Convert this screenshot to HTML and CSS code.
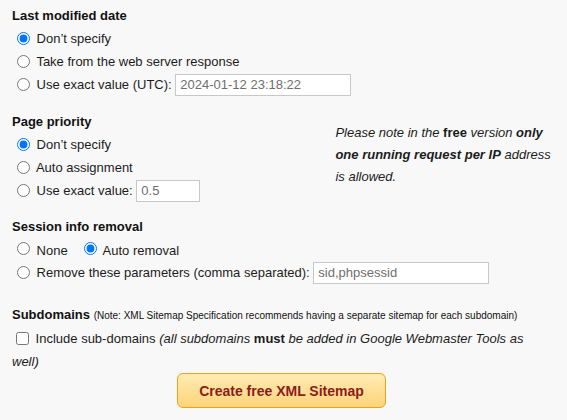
FILE: index.html
```html
<!DOCTYPE html>
<html>
<head>
<meta charset="utf-8">
<link rel="stylesheet" href="styles.css">
</head>
<body>
<form class="form">
  <section class="group">
    <h3 class="title">Last modified date</h3>
    <label class="opt"><input type="radio" name="lm" checked> Don’t specify</label>
    <label class="opt"><input type="radio" name="lm"> Take from the web server response</label>
    <label class="opt"><input type="radio" name="lm"> Use exact value (UTC): <input class="field w-date" type="text" value="2024-01-12 23:18:22"></label>
  </section>

  <section class="group g2 split">
    <div class="col">
      <h3 class="title">Page priority</h3>
      <label class="opt"><input type="radio" name="pp" checked> Don’t specify</label>
      <label class="opt"><input type="radio" name="pp"> Auto assignment</label>
      <label class="opt"><input type="radio" name="pp"> Use exact value: <input class="field w-prio" type="text" value="0.5"></label>
    </div>
    <p class="note">Please note in the <b class="up">free</b> version <b>only one running request per IP</b> address is allowed.</p>
  </section>

  <section class="group g3">
    <h3 class="title">Session info removal</h3>
    <div class="opt">
      <label><input type="radio" name="si"> None</label>
      <label class="gap"><input type="radio" name="si" checked> Auto removal</label>
    </div>
    <label class="opt"><input type="radio" name="si"> Remove these parameters (comma separated): <input class="field w-sess" type="text" value="sid,phpsessid"></label>
  </section>

  <section class="group g4">
    <h3 class="title">Subdomains <span class="small">(Note: XML Sitemap Specification recommends having a separate sitemap for each subdomain)</span></h3>
    <label class="check"><input type="checkbox"> Include sub-domains <i>(all subdomains <b class="up">must</b> be added in Google Webmaster Tools as well)</i></label>
    <div class="actions"><button type="button" class="btn">Create free XML Sitemap</button></div>
  </section>
</form>
</body>
</html>
```
FILE: styles.css
```css
html, body {
  margin: 0;
  padding: 0;
  background: #f8f8f8;
}
body {
  font-family: "Liberation Sans", Arial, sans-serif;
  font-size: 13px;
  color: #1c1c1c;
}
.form {
  padding: 5px 12px 0 12px;
}
.group {
  margin: 0;
}
.g2 { margin-top: 15px; }
.g3 { margin-top: 14px; }
.g4 { margin-top: 20px; }
.title {
  font-size: 13px;
  font-weight: bold;
  margin: 0;
  line-height: 22px;
  color: #111;
}
.small {
  font-size: 10px;
  font-weight: normal;
}
.opt {
  display: flex;
  align-items: center;
  height: 23px;
  white-space: pre;
}
.opt input[type=radio] {
  width: 13px;
  height: 13px;
  margin: 0 3px 0 5px;
}
.gap {
  margin-left: 11px;
}
.field {
  font-family: "Liberation Sans", Arial, sans-serif;
  font-size: 13px;
  color: #6e6e6e;
  background: #fff;
  border: 1px solid #c8c8c8;
  height: 22px;
  box-sizing: border-box;
  padding: 0 4px;
  margin: 0;
  outline: none;
}
.w-date { width: 176px; }
.w-prio { width: 64px; }
.w-sess { width: 176px; }
.split {
  display: flex;
}
.col {
  width: 324px;
}
.note {
  margin: 11px 0 0 0;
  width: 220px;
  font-style: italic;
  line-height: 22px;
}
.up {
  font-style: normal;
}
.check {
  display: block;
  line-height: 23px;
  padding-right: 14px;
}
.check input {
  width: 13px;
  height: 13px;
  margin: 0 3px 0 4px;
  vertical-align: -2px;
}
.actions {
  display: flex;
  justify-content: center;
  padding-right: 4px;
}
.btn {
  width: 209px;
  height: 35px;
  border: 1px solid #e9a31b;
  border-radius: 6px;
  background: linear-gradient(#ffebb3, #fdd47a);
  color: #8c1c1c;
  font-family: "Liberation Sans", Arial, sans-serif;
  font-size: 14px;
  font-weight: bold;
  padding: 0;
  margin: 0;
}
```
